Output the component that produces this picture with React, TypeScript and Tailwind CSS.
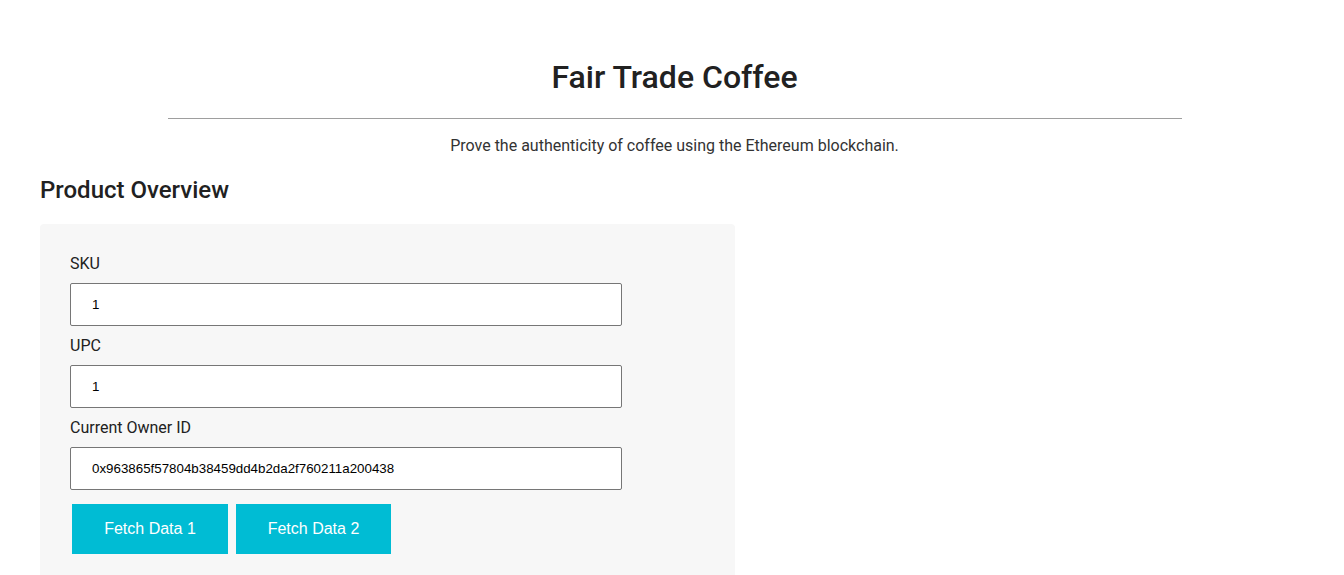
export default function App() {
  const fields = [
    { label: "SKU", value: "1" },
    { label: "UPC", value: "1" },
    { label: "Current Owner ID", value: "0x963865f57804b38459dd4b2da2f760211a200438" },
  ];

  return (
    <div className="min-h-screen bg-white text-[#212121] font-['Roboto',sans-serif]">
      <div className="pt-[58px] pl-[5px] text-center">
        <h1 className="text-[32px] leading-[38px] font-medium">Fair Trade Coffee</h1>
        <hr className="mx-auto mt-[22px] w-[1014px] border-0 border-t border-[#9e9e9e]" />
        <p className="mt-[15px] text-[16px] leading-[24px] text-[#333]">
          Prove the authenticity of coffee using the Ethereum blockchain.
        </p>
      </div>
      <div className="px-10">
        <h2 className="mt-[17px] text-[24px] leading-[30px] font-medium">Product Overview</h2>
        <div className="mt-[19px] w-[695px] rounded bg-[#f7f7f7] pl-[30px] pt-[30px] pb-6">
          {fields.map((f) => (
            <div key={f.label}>
              <label className="block text-[16px] leading-[20px] text-[#212121] mb-[9px]">
                {f.label}
              </label>
              <input
                readOnly
                value={f.value}
                className="block w-[552px] h-[43px] mb-[10px] bg-white border border-[#767676] rounded-[2px] pl-[21px] text-[13.33px] text-black font-['Liberation_Sans',Arial,sans-serif] outline-none"
              />
            </div>
          ))}
          <div className="flex gap-2 ml-[2px] mt-[14px]">
            <button className="w-[156px] h-[50px] bg-[#00bcd4] text-white text-[16px] font-['Liberation_Sans',Arial,sans-serif]">
              Fetch Data 1
            </button>
            <button className="w-[155px] h-[50px] bg-[#00bcd4] text-white text-[16px] font-['Liberation_Sans',Arial,sans-serif]">
              Fetch Data 2
            </button>
          </div>
        </div>
      </div>
    </div>
  );
}
